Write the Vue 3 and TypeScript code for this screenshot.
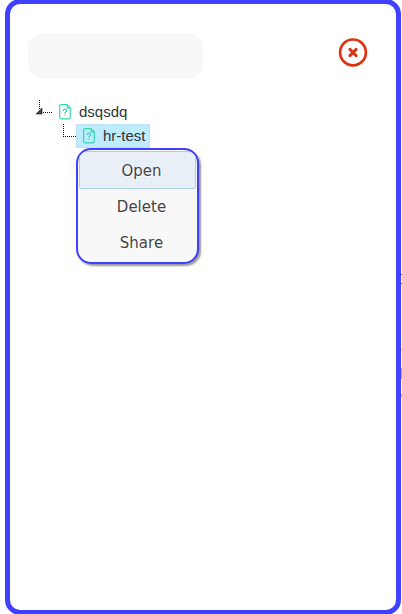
<script setup lang="ts">
import { ref } from 'vue'

interface MenuItem {
  label: string
  active: boolean
}

const query = ref<string>('')
const items: MenuItem[] = [
  { label: 'Open', active: true },
  { label: 'Delete', active: false },
  { label: 'Share', active: false },
]
const nodes: string[] = ['dsqsdq', 'hr-test']
</script>

<template>
  <main class="screen">
    <section class="panel">
      <header class="top">
        <input v-model="query" class="search" type="text" />
        <button class="close" type="button">
          <svg width="30" height="30" viewBox="0 0 30 30" fill="none" stroke="#dc3412">
            <circle cx="15" cy="15.4" r="12.9" stroke-width="2.7" />
            <path d="M11.9 12.4 L18.1 18.6 M18.1 12.4 L11.9 18.6" stroke-width="2.9" stroke-linecap="round" />
          </svg>
        </button>
      </header>
      <ul class="tree">
        <li v-for="(name, i) in nodes" :key="name" class="row" :class="{ child: i === 1 }">
          <svg v-if="i === 0" class="branch" width="24" height="24" shape-rendering="crispEdges">
            <path d="M11.5 0 V9 M15 12.5 H24" stroke="#111" stroke-dasharray="1 1" />
            <path d="M8 14 L14 8 V14 Z" fill="#444" stroke="#111" stroke-width="0.6" shape-rendering="auto" />
          </svg>
          <svg v-else class="branch" width="24" height="24" shape-rendering="crispEdges">
            <path d="M11.5 0 V13 M11 12.5 H24" stroke="#111" stroke-dasharray="1 1" fill="none" />
          </svg>
          <span class="node" :class="{ selected: i === 1 }">
            <svg class="file" width="12" height="16" viewBox="0 0 12 16" fill="none" stroke="#35d6ae" stroke-linejoin="round" stroke-linecap="round">
              <path d="M8.2 .7 H2.2 Q.7 .7 .7 2.2 V13.3 Q.7 14.8 2.2 14.8 H9.8 Q11.3 14.8 11.3 13.3 V3.8 Z" stroke-width="1.2" />
              <path d="M8.2 1 V3.8 H11" stroke-width="1.2" />
              <path d="M4.4 6.5 Q4.4 5.1 6 5.1 Q7.6 5.1 7.6 6.5 Q7.6 7.4 6.6 7.9 Q6 8.2 6 9.2 M6 11.1 V11.3" stroke-width="1.2" />
            </svg>
            <span class="label">{{ name }}</span>
          </span>
        </li>
      </ul>
      <ul class="menu">
        <li v-for="item in items" :key="item.label" class="item" :class="{ active: item.active }">
          {{ item.label }}
        </li>
      </ul>
    </section>
    <svg class="edge" width="1" height="130" shape-rendering="crispEdges">
      <path d="M0 0h1v1H0z M0 9h1v1H0z" fill="#4b45b0" />
      <path d="M0 74h1v3H0z" fill="#e6d9b0" />
      <path d="M0 94h1v11H0z" fill="#dfa322" />
      <path d="M0 120h1v3H0z" fill="#b9b3c0" />
    </svg>
  </main>
</template>

<style>
body {
  overflow: hidden;
  background: #fff;
}
</style>

<style scoped>
.screen {
  position: relative;
  box-sizing: border-box;
  width: 402px;
  height: 614px;
  padding-left: 5px;
  overflow: hidden;
  background: #fff;
}
.panel {
  position: relative;
  box-sizing: border-box;
  width: 396px;
  height: 616px;
  margin-top: -1px;
  padding: 29px 28px 0 18px;
  border: 5px solid #4040ff;
  border-radius: 15px;
}
.top {
  display: flex;
  justify-content: space-between;
  align-items: flex-start;
}
.search {
  box-sizing: border-box;
  width: 175px;
  height: 46px;
  padding: 0 12px;
  border: 0;
  border-radius: 15px;
  outline: 0;
  background: #f8f8f8;
}
.close {
  display: flex;
  margin-top: 4px;
  padding: 0;
  border: 0;
  background: none;
}
ul {
  margin: 0;
  padding: 0;
  list-style: none;
}
.tree {
  padding-top: 21px;
  font: 15px/24px "Liberation Sans", Arial, sans-serif;
  color: #333;
}
.row {
  display: flex;
  height: 24px;
}
.child {
  padding-left: 24px;
}
.branch {
  flex: none;
}
.node {
  display: flex;
  align-items: center;
  box-sizing: border-box;
  height: 24px;
  padding: 0 4px 0 7px;
}
.selected {
  border-radius: 2px;
  background: #beebff;
  box-shadow: inset 0 0 1px #999;
}
.file {
  flex: none;
  margin-right: 8px;
}
.menu {
  position: absolute;
  top: 144px;
  left: 66px;
  box-sizing: border-box;
  width: 123px;
  height: 116px;
  padding: 1px;
  overflow: hidden;
  border: 2px solid #4040ff;
  border-radius: 15px;
  background: #f8f8f8;
  box-shadow: 2px 2px 2px #999;
  font: 15px/38px "DejaVu Sans", Verdana, sans-serif;
  color: #444;
  text-align: center;
  text-shadow: 1px 1px 0 #fff;
}
.item {
  height: 36px;
  padding-left: 8px;
}
.active {
  box-sizing: border-box;
  height: 38px;
  border: 1px solid #aecfe0;
  border-radius: 2px;
  background: #e8eff7;
}
.active + .item {
  margin-top: -1px;
}
.edge {
  position: absolute;
  top: 274px;
  left: 401px;
}
</style>
